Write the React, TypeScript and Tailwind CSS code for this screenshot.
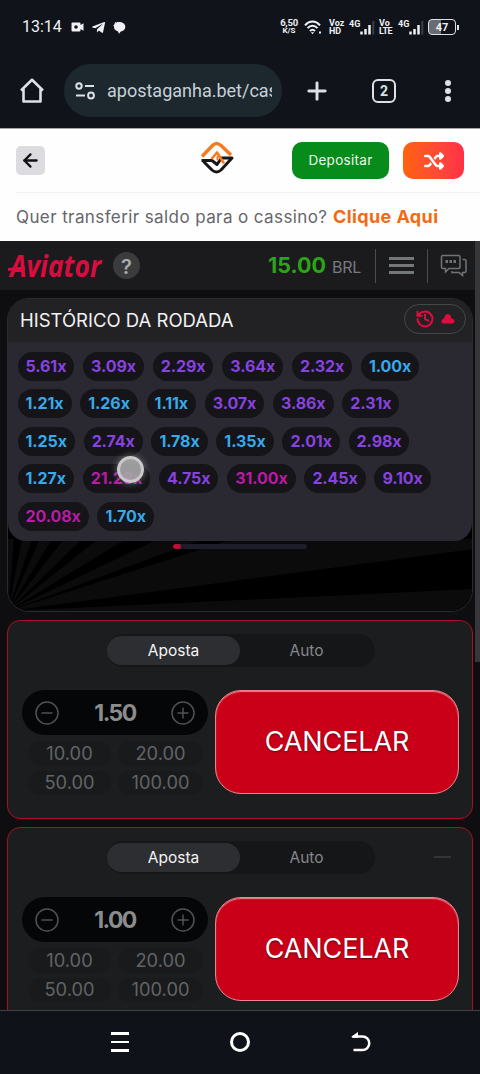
import { ArrowLeft, History, Plus } from "lucide-react";
import { FaTelegramPlane } from "react-icons/fa";
import { FaShuffle } from "react-icons/fa6";

const rounds = [
  ["5.61", "3.09", "2.29", "3.64", "2.32", "1.00"],
  ["1.21", "1.26", "1.11", "3.07", "3.86", "2.31"],
  ["1.25", "2.74", "1.78", "1.35", "2.01", "2.98"],
  ["1.27", "21.28", "4.75", "31.00", "2.45", "9.10"],
  ["20.08", "1.70"],
];

const quickAmounts = ["10.00", "20.00", "50.00", "100.00"];

function roundColor(value: string) {
  const n = Number(value);
  if (n < 2) return "text-[#38a9ea]";
  if (n < 10) return "text-[#8743df]";
  return "text-[#b91ba5]";
}

function SignalBars() {
  return (
    <svg width="15" height="15" viewBox="0 0 15 15" aria-hidden="true">
      <path d="M1.5 14.5v-3M5.5 14.5V9M9.5 14.5V5" stroke="#eef0f4" strokeWidth="2.5" />
      <path d="M13.3 14.5V1" stroke="#3c3e45" strokeWidth="2" />
    </svg>
  );
}

function StatusBar() {
  return (
    <div className="flex h-[54px] items-center text-[#eef0f4]">
      <span className="ml-[22px] w-[40px] text-[16px] leading-none">13:14</span>
      <svg className="ml-[9px]" width="13" height="10" viewBox="0 0 13 10" aria-hidden="true">
        <path
          d="M1.5 .5h7a1 1 0 0 1 1 1V3l3-1.7v7.4l-3-1.7v1.5a1 1 0 0 1-1 1h-7a1 1 0 0 1-1-1v-7a1 1 0 0 1 1-1z"
          fill="currentColor"
        />
        <circle cx="5" cy="5" r="1.8" fill="#11131a" />
      </svg>
      <FaTelegramPlane className="ml-[7px]" size={15} />
      <svg className="ml-[7px]" width="13" height="13" viewBox="0 0 13 13" aria-hidden="true">
        <path
          d="M2 1l1.5.4C7 .2 12.3 1.5 12.3 5.7c0 2.8-2 4.6-4.5 4.8L6 12.8l-1-2.4C2 9.7.8 7.7 1 5.6L.2 4.1 1.4 4 .9 2.4l1.3.3z"
          fill="currentColor"
        />
      </svg>

      <div className="ml-[153px] w-[20px] text-center text-[9.5px] leading-[8px] font-bold">
        <div className="tracking-tight">6,50</div>
        <div className="text-[8px]">K/S</div>
      </div>
      <svg className="ml-[5px]" width="18" height="15" viewBox="0 0 18 15" fill="none" aria-hidden="true">
        <path
          d="M1 5.3C5.5 .3 11.5 .3 16 5.3M3.5 8.2c3-3.3 7-3.3 10 0M6 11c1.7-1.7 3.3-1.7 5 0"
          stroke="currentColor"
          strokeWidth="2"
        />
        <path d="M8.5 14.3 6.8 12.2h3.4zM15 11.5h2v2h-2z" fill="currentColor" />
      </svg>
      <div className="ml-[7px] w-[16px] text-[9px] leading-[8px] font-bold">
        <div>Voz</div>
        <div>HD</div>
      </div>
      <div className="ml-[4px] flex w-[26px]">
        <span className="w-[11px] text-[9px] leading-[8px] font-bold">4G</span>
        <SignalBars />
      </div>
      <div className="ml-[4px] w-[14px] text-[9px] leading-[8px] font-bold">
        <div>Vo</div>
        <div className="tracking-tighter">LTE</div>
      </div>
      <div className="ml-[5px] flex w-[26px]">
        <span className="w-[11px] text-[9px] leading-[8px] font-bold">4G</span>
        <SignalBars />
      </div>
      <div className="ml-[4px] flex h-[16px] w-[28px] items-center justify-center rounded-[4px] border-[1.5px] border-[#dfe1e6] bg-linear-to-r from-[#6a6c73] from-45% to-transparent to-45% text-[11px] leading-none font-bold">
        47
      </div>
      <div className="ml-[1px] h-[5px] w-[1.5px] bg-[#dfe1e6]" />
    </div>
  );
}

function BrowserBar() {
  return (
    <div className="flex h-[73px] items-center text-[#dde1e7]">
      <svg className="ml-[20px]" width="24" height="26" viewBox="0 0 24 26" fill="none" aria-hidden="true">
        <path
          d="M1 12.5 12 1.8l11 10.7M3.5 11v12.5h17V11"
          stroke="currentColor"
          strokeWidth="2.6"
          strokeLinejoin="round"
        />
      </svg>
      <div className="ml-[20px] flex h-[53px] w-[218px] items-center rounded-full bg-[#1c282e] pl-[11px]">
        <svg width="21" height="18" viewBox="0 0 21 18" fill="none" stroke="currentColor" strokeWidth="2" aria-hidden="true">
          <circle cx="4" cy="4" r="2.7" />
          <path d="M10 4h9M1 13.5h9" />
          <circle cx="16" cy="13.5" r="2.9" />
        </svg>
        <span className="ml-[11px] w-[165px] overflow-hidden text-[18px] whitespace-nowrap text-[#c7d1d8]">
          apostaganha.bet/cas
        </span>
      </div>
      <Plus className="ml-[21px]" size={28} strokeWidth={2.5} />
      <div className="ml-[41px] flex size-[24px] items-center justify-center rounded-[6px] border-[2.5px] border-current text-[14px] leading-none font-bold">
        2
      </div>
      <div className="ml-[49px] flex w-[6px] flex-col gap-[2px]">
        <span className="size-[6px] rounded-full bg-current" />
        <span className="size-[6px] rounded-full bg-current" />
        <span className="size-[6px] rounded-full bg-current" />
      </div>
    </div>
  );
}

function SiteHeader() {
  return (
    <header className="h-[113px] border-t border-[#a0a2a6] bg-[#fefefe]">
      <div className="ml-4 flex h-[64px] items-center border-b border-[#eff1f4]">
        <button type="button" className="flex size-[29px] items-center justify-center rounded-[5px] bg-[#dcdce0] text-[#101014]">
          <ArrowLeft size={21} strokeWidth={2.6} />
        </button>
        <svg className="mt-[-6px] ml-[155px]" width="34" height="34" viewBox="0 0 34 34" fill="none" strokeLinejoin="round" aria-hidden="true">
          <path d="M2 15.500 12.500 4.500q4-4 8.500 0L31 14" stroke="#f57b20" strokeWidth="3.400" />
          <path d="M1.500 19.500H12l5 4 4.500-6.500h10.500L21 29q-4.500 4-9 0L3.500 20.500" stroke="#17171a" strokeWidth="3" />
          <path d="M11.500 18 17 11.500l7 11" stroke="#f57b20" strokeWidth="2.600" />
          <path d="M17.500 15v4.500" stroke="#f57b20" strokeWidth="2" />
        </svg>
        <button type="button" className="ml-[58px] h-[37px] w-[97px] rounded-[10px] bg-[#078b1a] text-[13.5px] tracking-[0.3px] text-[#edfaee]">
          Depositar
        </button>
        <button type="button" className="ml-[14px] flex h-[37px] w-[61px] items-center justify-center rounded-[10px] bg-linear-to-r from-[#ff6108] to-[#ff3045] text-white">
          <FaShuffle size={20} />
        </button>
      </div>
      <p className="ml-4 flex h-[49px] items-center text-[17px] whitespace-nowrap text-[#65656b]">
        <span className="w-[317px] tracking-[0.4px]">Quer transferir saldo para o cassino?</span>
        <a className="pb-[2px] text-[18px] font-bold tracking-[0.4px] text-[#f26a12]">Clique Aqui</a>
      </p>
    </header>
  );
}

function GameHeader() {
  return (
    <div className="flex h-[49px] w-[475px] items-center bg-[#1b1b1d]">
      <svg className="ml-[6px] overflow-visible" width="98" height="32" viewBox="0 0 98 32" aria-label="Aviator">
        <text
          x="4"
          y="26.500"
          textLength="91"
          lengthAdjust="spacingAndGlyphs"
          fill="#d90c3f"
          fontFamily="Open Sans, sans-serif"
          fontSize="31"
          fontStyle="italic"
          fontWeight="700"
        >
          Aviator
        </text>
        <path d="M2 19.5 19 18" stroke="#d90c3f" strokeWidth="3" />
      </svg>
      <div className="ml-[9px] flex size-[27px] items-center justify-center rounded-full bg-[#3a3b3d] pt-[2px] text-[20px] leading-none font-semibold text-[#a8a9aa]">
        ?
      </div>
      <div className="ml-[128px] w-[64px] text-[21.5px] font-bold text-[#2ba416]">15.00</div>
      <div className="w-[43px] pt-[3px] text-[16px] tracking-[-0.3px] text-[#767a7f]">BRL</div>
      <div className="h-[34px] w-px bg-[#4b4d50]" />
      <div className="ml-[13px] flex w-[25px] flex-col gap-[4px]">
        <span className="h-[3px] bg-[#74787b]" />
        <span className="h-[3px] bg-[#74787b]" />
        <span className="h-[3px] bg-[#74787b]" />
      </div>
      <div className="ml-[13px] h-[34px] w-px bg-[#4b4d50]" />
      <svg className="ml-[12px]" width="28" height="23" viewBox="0 0 28 23" fill="none" stroke="#707477" strokeWidth="1.5" aria-hidden="true">
        <path d="M3 1.5h15.5q1.5 0 1.5 1.5v10q0 1.5-1.5 1.5H9L5.5 18v-3.5H3q-1.5 0-1.5-1.5v-10q0-1.5 1.5-1.5z" />
        <path d="M22.5 5.5h2q1.5 0 1.5 1.5v10q0 1.5-1.5 1.5h-2v3L19 18.5h-7V17" />
        <path d="M5.5 7.5H8M9.5 7.5H12M13.5 7.5H16" strokeWidth="3" />
      </svg>
    </div>
  );
}

function RoundHistory() {
  return (
    <div className="relative overflow-hidden rounded-[18px] bg-[#2a2931]">
      <div className="flex h-[43px] items-center justify-between bg-[#222225] pr-[6px] pl-[12px]">
        <h2 className="text-[18.5px] whitespace-nowrap text-[#f2f2f3]">HISTÓRICO DA RODADA</h2>
        <div className="mt-[-4px] flex h-[30px] w-[62px] items-center justify-center gap-[6px] rounded-full border border-[#46464c] bg-[#232326] text-[#e30a3f]">
          <History size={20} strokeWidth={2.4} />
          <svg width="14" height="11" viewBox="0 0 14 11" aria-hidden="true">
            <path d="M3 10.500C-.5 10.500-.5 6.500 3 5.500 4-.5 9.500-.5 10.500 5.500c4 .5 4 5 .5 5z" fill="currentColor" />
          </svg>
        </div>
      </div>
      <div className="flex h-[199px] flex-col gap-[8.4px] pt-[10px] pl-[9.5px]">
        {rounds.map((row, i) => (
          <div key={i} className="flex gap-[8.8px]">
            {row.map((value) => (
              <span
                key={value}
                className={`flex h-[29px] items-center rounded-full bg-[#141419] px-[8px] pb-[1px] text-[16px] font-bold tracking-[-0.1px] ${roundColor(value)}`}
              >
                {value}x
              </span>
            ))}
          </div>
        ))}
      </div>
    </div>
  );
}

function PlayArea() {
  return (
    <div className="relative ml-[7px] h-[314px] w-[466px] overflow-hidden rounded-[22px] border border-[#2b2b2e] bg-black">
      <svg className="absolute bottom-0 left-0" width="466" height="72" viewBox="0 0 466 72" aria-hidden="true">
        <path
          fill="#0b0b0c"
          d="M0 72 0 0H6zM0 72 14 0H24zM0 72 32 0H44zM0 72 56 0H74zM0 72 90 0H118zM0 72 150 0H195L0 72zM0 72 225 0H466V10zM0 72 466 50V72z"
        />
      </svg>
      <RoundHistory />
      <div className="relative mx-auto mt-[3px] h-[5px] w-[134px] overflow-hidden rounded-full bg-[#1d1d29]">
        <div className="h-full w-[8px] rounded-full bg-[#c40b33]" />
      </div>
      {/* touch indicator */}
      <div className="absolute top-[157px] left-[109px] size-[27px] rounded-full border-[3px] border-[#c9c9ca] bg-[#aaaaac]/90 shadow-[0_0_6px_1px_#aaaaac77]" />
    </div>
  );
}

function StepButton({ plus = false }: { plus?: boolean }) {
  return (
    <svg width="24" height="24" viewBox="0 0 24 24" fill="none" stroke="#515154" strokeWidth="1.5" aria-hidden="true">
      <circle cx="12" cy="12" r="11" />
      <path d={plus ? "M6.5 12h11M12 6.5v11" : "M6.5 12h11"} />
    </svg>
  );
}

function BetCard({ amount, removable = false }: { amount: string; removable?: boolean }) {
  return (
    <section className="relative ml-[7px] h-[199px] w-[466px] shrink-0 rounded-[13px] border-[1.5px] border-[#a91024] bg-[#1c1d1f] pt-[13px]">
      <div className="ml-[99px] flex h-[33px] w-[268px] items-center rounded-full bg-[#151618] text-[15.5px]">
        <div className="flex h-[29px] w-[133px] items-center justify-center rounded-full bg-[#2d2e31] text-[#f4f4f5]">Aposta</div>
        <div className="flex-1 pr-[2px] text-center text-[#85878a]">Auto</div>
      </div>
      {removable && <div className="absolute top-[28px] right-[21px] h-[2px] w-[17px] bg-[#343538]" />}
      <div className="mt-[23px] ml-[14px] flex">
        <div className="w-[186px]">
          <div className="flex h-[45px] items-center justify-between rounded-full bg-[#050607] px-[13px]">
            <StepButton />
            <span className="pt-[2px] text-[23px] font-bold tracking-[-1.6px] text-[#8b8c8e]">{amount}</span>
            <StepButton plus />
          </div>
          <div className="mt-[6px] grid grid-cols-[83px_85px] gap-x-[7px] gap-y-[5px] pl-[6px]">
            {quickAmounts.map((quick) => (
              <div key={quick} className="flex h-[24.5px] items-center justify-center rounded-full bg-[#191a1b] text-[18.3px] text-[#626467]">
                {quick}
              </div>
            ))}
          </div>
        </div>
        <button
          type="button"
          className="ml-[7px] h-[104px] w-[244px] rounded-[26px] border border-[#e9848e] bg-[#ca0018] text-[27px] tracking-[-0.1px] text-white shadow-[inset_0_1px_1px_#e9848e] text-shadow-[0_1px_2px_#00000080]"
        >
          CANCELAR
        </button>
      </div>
    </section>
  );
}

function NavigationBar() {
  return (
    <nav className="flex h-[64px] items-center border-t border-[#3c4042] bg-[#0f1218] pb-px text-white">
      <div className="ml-[111px] flex w-[18px] flex-col gap-[6px]">
        <span className="h-[2.5px] bg-white" />
        <span className="h-[2.5px] bg-white" />
        <span className="h-[2.5px] bg-white" />
      </div>
      <div className="ml-[101px] size-[20px] rounded-full border-[3px] border-white" />
      <svg className="ml-[101px]" width="20" height="20" viewBox="0 0 20 20" fill="none" aria-hidden="true">
        <path d="M2 4.5h9.5a6.7 6.7 0 0 1 0 13.5H2.500" stroke="white" strokeWidth="2.500" />
        <path d="M.5 4.5 7 0v5.7H1z" fill="white" />
      </svg>
    </nav>
  );
}

export default function App() {
  return (
    <div className="flex h-[1074px] w-[480px] flex-col overflow-hidden bg-[#10131a] font-[Inter,sans-serif]">
      <div className="h-[128px] shrink-0 font-[Roboto,sans-serif]">
        <StatusBar />
        <BrowserBar />
      </div>
      <SiteHeader />
      <main className="flex h-[769px] justify-between overflow-hidden bg-[#0e0d0f]">
        <div className="w-[475px]">
          <GameHeader />
          <div className="flex flex-col gap-[8px] pt-[8px]">
            <PlayArea />
            <BetCard amount="1.50" />
            <BetCard amount="1.00" removable />
          </div>
        </div>
        <div className="h-[421px] w-[5px] bg-[#36373a]" />
      </main>
      <NavigationBar />
    </div>
  );
}
